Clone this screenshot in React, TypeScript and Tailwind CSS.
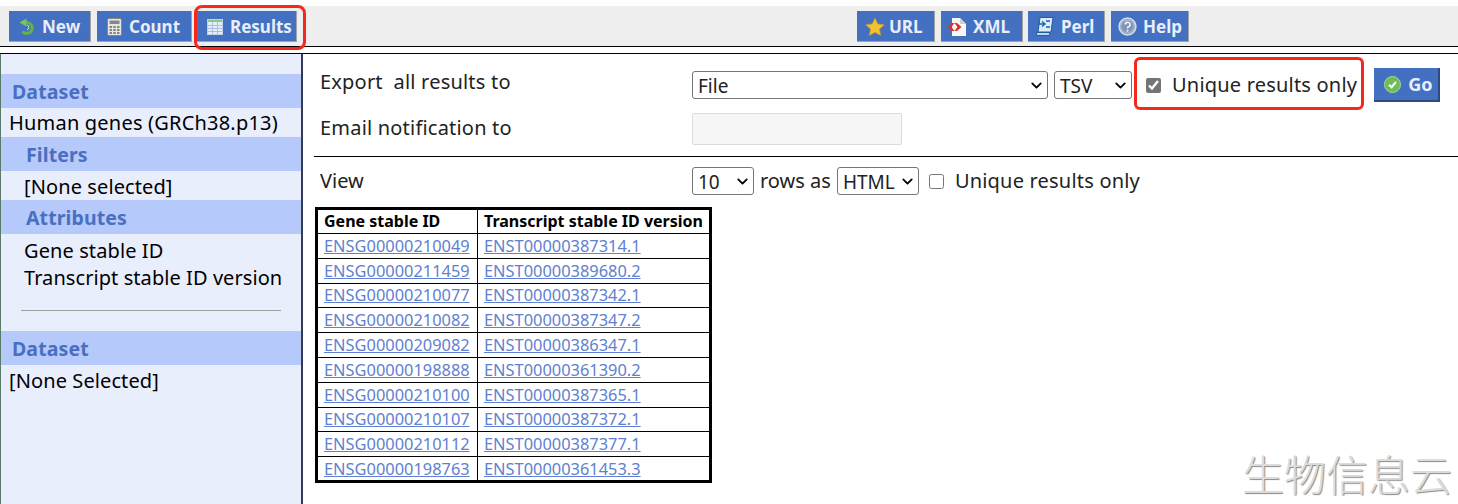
import React from 'react';
import { ChevronDown } from 'lucide-react';

const font = '"Noto Sans", "Noto Sans CJK SC", sans-serif';

const rows = [
  ['ENSG00000210049', 'ENST00000387314.1'],
  ['ENSG00000211459', 'ENST00000389680.2'],
  ['ENSG00000210077', 'ENST00000387342.1'],
  ['ENSG00000210082', 'ENST00000387347.2'],
  ['ENSG00000209082', 'ENST00000386347.1'],
  ['ENSG00000198888', 'ENST00000361390.2'],
  ['ENSG00000210100', 'ENST00000387365.1'],
  ['ENSG00000210107', 'ENST00000387372.1'],
  ['ENSG00000210112', 'ENST00000387377.1'],
  ['ENSG00000198763', 'ENST00000361453.3'],
];

const NewIcon = () => (
  <svg width="18" height="18" viewBox="0 0 18 18" fill="none">
    <path d="M8 4.5 A5.5 5.5 0 1 1 4.5 13.5" stroke="#62b247" strokeWidth="3" />
    <path d="M1.5 4.5 L8.5 0.5 V8.5 Z" fill="#7cc45f" />
    <path d="M9 7 A2.6 2.6 0 0 1 9 12" stroke="#d3edc4" strokeWidth="1" />
  </svg>
);

const CountIcon = () => (
  <svg width="15" height="18" viewBox="0 0 15 18">
    <rect x="0.5" y="0.5" width="14" height="17" rx="1.5" fill="#e8e6e0" stroke="#8a867e" />
    <rect x="2.5" y="2.5" width="10" height="3.5" fill="#7f8a96" />
    <g fill="#8a867e">
      <rect x="2.5" y="8" width="2.5" height="2" />
      <rect x="6.25" y="8" width="2.5" height="2" />
      <rect x="10" y="8" width="2.5" height="2" />
      <rect x="2.5" y="11" width="2.5" height="2" />
      <rect x="6.25" y="11" width="2.5" height="2" />
      <rect x="10" y="11" width="2.5" height="2" />
      <rect x="2.5" y="14" width="2.5" height="2" />
      <rect x="6.25" y="14" width="2.5" height="2" />
      <rect x="10" y="14" width="2.5" height="2" />
    </g>
  </svg>
);

const ResultsIcon = () => (
  <svg width="16" height="16" viewBox="0 0 16 16">
    <rect x="0.5" y="0.5" width="15" height="15" fill="#e6eefa" stroke="#c0d0ea" />
    <rect x="1" y="1" width="14" height="2" fill="#8ccb78" />
    <path d="M1 6.5H15M1 9.5H15M1 12.5H15M5.5 3V15M10.5 3V15" stroke="#a9c0e4" strokeWidth="1" />
  </svg>
);

const StarIcon = () => (
  <svg width="20" height="20" viewBox="0 0 20 20">
    <path d="M10 1 L12.8 6.9 L19.2 7.7 L14.5 12.1 L15.7 18.5 L10 15.4 L4.3 18.5 L5.5 12.1 L0.8 7.7 L7.2 6.9 Z" fill="#f4c22e" stroke="#c9932a" strokeWidth="0.7" />
  </svg>
);

const XmlIcon = () => (
  <svg width="20" height="20" viewBox="0 0 20 20">
    <path d="M5 1 H13 L19 7 V19 H5 Z" fill="#f7f7f7" />
    <path d="M13 1 V7 H19 Z" fill="#cfcfcf" />
    <path d="M0.5 10 L5 6 H7.5 L4.5 10 L7.5 14 H5 Z M14.5 10 L10 6 H7.5 L10.5 10 L7.5 14 H10 Z" fill="#d8322c" />
  </svg>
);

const PerlIcon = () => (
  <svg width="19" height="21" viewBox="0 0 19 21" fill="none">
    <path d="M5 1.5 H18 L16 16 H3 Z" fill="#dcebf8" stroke="#1f5f9e" />
    <path d="M1 16.5 H15 L14 19.5 H2 Z" fill="#bcd6ee" stroke="#1f5f9e" />
    <path d="M3 8 H9 M7 5.5 L10 8 L7 10.5 M11 5 H15 M11 11 H15" stroke="#1a63ad" strokeWidth="1.4" />
  </svg>
);

const HelpIcon = () => (
  <svg width="19" height="19" viewBox="0 0 18 18" fill="none">
    <circle cx="9" cy="9" r="8" fill="#9db1cc" stroke="#d4dce8" strokeWidth="1.4" />
    <circle cx="9" cy="9" r="5.5" fill="#7e95b6" />
    <path d="M6.8 7.2 A2.3 2.2 0 1 1 9.6 9.4 Q9 9.7 9 10.8" stroke="#eef2f8" strokeWidth="1.5" />
    <circle cx="9" cy="13" r="1" fill="#eef2f8" />
  </svg>
);

const GoIcon = () => (
  <svg width="17" height="17" viewBox="0 0 17 17" fill="none">
    <circle cx="8.5" cy="8.5" r="8" fill="#6fbb55" stroke="#a9d897" />
    <path d="M5 8.8 L7.6 11.2 L12 6" stroke="#fff" strokeWidth="2" />
  </svg>
);

function ToolButton({ icon, label, className }: { icon: React.ReactNode; label: string; className: string }) {
  return (
    <div className={`h-[31px] pt-[1px] shrink-0 flex items-center bg-[#4470c2] border-r border-b border-[#a3a3a3] text-[17px] font-bold text-[#e8eefa] ${className}`}>
      {icon}
      <span className="pt-[1px]">{label}</span>
    </div>
  );
}

function SideHeading({ children, indent }: { children: React.ReactNode; indent?: boolean }) {
  return (
    <div className={`h-[34px] pt-[1px] flex items-center bg-[#b5c9fb] text-[19.5px] font-bold text-[#4a6fc0] ${indent ? 'pl-[25px]' : 'pl-[11px]'}`}>
      {children}
    </div>
  );
}

function Select({ value, className }: { value: string; className: string }) {
  return (
    <div className={`relative h-[28px] shrink-0 ${className}`}>
      <select className="w-full h-full appearance-none pl-[5px] pb-[1px] border border-[#767676] rounded-[3px] bg-white text-[19px] text-[#222]" defaultValue={value}>
        <option>{value}</option>
      </select>
      <ChevronDown className="absolute right-[3px] top-[6px] w-[17px] h-[17px] text-black" strokeWidth={2.5} />
    </div>
  );
}

function Sidebar() {
  return (
    <aside className="w-[303px] shrink-0 h-[450px] pt-[20px] bg-[#e9eefd] border-l border-l-[#5a7a6a] border-r-2 border-r-[#333a55] text-[20px] tracking-[0.1px] text-black">
      <SideHeading>Dataset</SideHeading>
      <div className="h-[29px] pl-[8px] leading-[29px] whitespace-nowrap tracking-[0.2px]">Human genes (GRCh38.p13)</div>
      <SideHeading indent>Filters</SideHeading>
      <div className="h-[29px] pl-[23px] leading-[32px]">[None selected]</div>
      <SideHeading indent>Attributes</SideHeading>
      <div className="pl-[23px] pt-[3px] leading-[27px]">
        <div>Gene stable ID</div>
        <div className="tracking-[0.07px]">Transcript stable ID version</div>
      </div>
      <div className="mx-[20px] mt-[19px] mb-[20px] w-[260px] h-px bg-[#a0a0a0]" />
      <SideHeading>Dataset</SideHeading>
      <div className="pl-[8px] pt-[1px] leading-[30px]">[None Selected]</div>
    </aside>
  );
}

function ResultsTable() {
  return (
    <table className="ml-[1px] mt-[2px] w-[397px] border-collapse border-[3px] border-black bg-white text-[16.4px]">
      <thead>
        <tr className="h-[25px]">
          <th className="w-[161px] border border-black pl-[6px] pb-[1px] text-left text-[16px] leading-[20px] font-bold text-black whitespace-nowrap">Gene stable ID</th>
          <th className="border border-black pl-[6px] pb-[1px] text-left text-[16px] leading-[20px] font-bold text-black whitespace-nowrap">Transcript stable ID version</th>
        </tr>
      </thead>
      <tbody>
        {rows.map(([gene, transcript]) => (
          <tr key={gene} className="h-[24.8px]">
            <td className="border border-black pl-[6px] leading-[20px] text-[#6080d2] underline">{gene}</td>
            <td className="border border-black pl-[6px] leading-[20px] text-[#6080d2] underline">{transcript}</td>
          </tr>
        ))}
      </tbody>
    </table>
  );
}

function MainPanel() {
  return (
    <main className="flex-1 min-w-0 pl-[11px] text-[20px] text-[#222]">
      <div className="h-[56px] flex items-start">
        <div className="w-[378px] pl-[6px] pt-[13px] leading-[30px] whitespace-pre tracking-[0.2px]">Export  all results to</div>
        <Select value="File" className="w-[356px] mt-[17px]" />
        <Select value="TSV" className="w-[78px] mt-[17px] ml-[6px]" />
        <label className="flex items-center ml-[14px] mt-[16px] h-[30px] whitespace-nowrap">
          <input type="checkbox" defaultChecked className="w-[15px] h-[15px] accent-[#757575]" />
          <span className="ml-[11px] tracking-[0.2px]">Unique results only</span>
        </label>
        <div className="ml-[17px] mt-[14px] w-[66px] h-[34px] pl-[10px] flex items-center gap-[7px] bg-[#4470c2] border-r-2 border-b-2 border-[#2f4a80] text-[18px] font-bold text-[#e8eefa]">
          <GoIcon />
          <span>Go</span>
        </div>
      </div>
      <div className="h-[46px] flex items-start">
        <div className="w-[378px] pl-[6px] pt-[3px] leading-[30px] tracking-[0.2px]">Email notification to</div>
        <input disabled className="w-[210px] h-[32px] mt-[3px] border border-[#dcdcdc] rounded-[2px] bg-[#f6f6f6]" />
      </div>
      <div className="h-px bg-black" />
      <div className="h-[48px] flex items-center">
        <div className="w-[378px] pl-[6px]">View</div>
        <Select value="10" className="w-[62px]" />
        <span className="ml-[6px]">rows as</span>
        <Select value="HTML" className="w-[82px] ml-[6px]" />
        <input type="checkbox" className="w-[15px] h-[15px] ml-[10px]" />
        <span className="ml-[11px] tracking-[0.2px]">Unique results only</span>
      </div>
      <ResultsTable />
    </main>
  );
}

export default function App() {
  return (
    <div className="relative w-[1458px] h-[504px] overflow-hidden bg-white" style={{ fontFamily: font }}>
      <div className="pt-[6px]">
        <div className="h-[41px] pt-[5px] pl-[9px] flex bg-[#eeeeee] border-b border-black">
          <ToolButton icon={<NewIcon />} label="New" className="w-[82px] pl-[9px] gap-[6px]" />
          <ToolButton icon={<CountIcon />} label="Count" className="w-[95px] ml-[6px] pl-[10px] gap-[7px]" />
          <ToolButton icon={<ResultsIcon />} label="Results" className="w-[100px] ml-[5px] pl-[10px] gap-[7px]" />
          <ToolButton icon={<StarIcon />} label="URL" className="w-[78px] ml-[560px] pl-[8px] gap-[4px]" />
          <ToolButton icon={<XmlIcon />} label="XML" className="w-[82px] ml-[6px] pl-[6px] gap-[6px]" />
          <ToolButton icon={<PerlIcon />} label="Perl" className="w-[77px] ml-[5px] pl-[7px] gap-[7px]" />
          <ToolButton icon={<HelpIcon />} label="Help" className="w-[78px] ml-[6px] pl-[7px] gap-[6px]" />
        </div>
      </div>
      <div className="h-[6px]" />
      <div className="h-px bg-black" />
      <div className="flex">
        <Sidebar />
        <MainPanel />
      </div>

      {/* red callouts and watermark sit on top of the page */}
      <div className="absolute left-[194px] top-[5px] w-[112px] h-[45px] rounded-[8px] border-[3px] border-[#f5281c]" />
      <div className="absolute left-[1134px] top-[57px] w-[230px] h-[53px] rounded-[6px] border-[3px] border-[#f5281c]" />
      <div className="absolute left-[1242px] top-[446px] text-[42px] leading-[58px] whitespace-nowrap text-[#dcdcdc] font-light [text-shadow:1px_1px_1px_#8a8a8a]">生物信息云</div>
    </div>
  );
}
